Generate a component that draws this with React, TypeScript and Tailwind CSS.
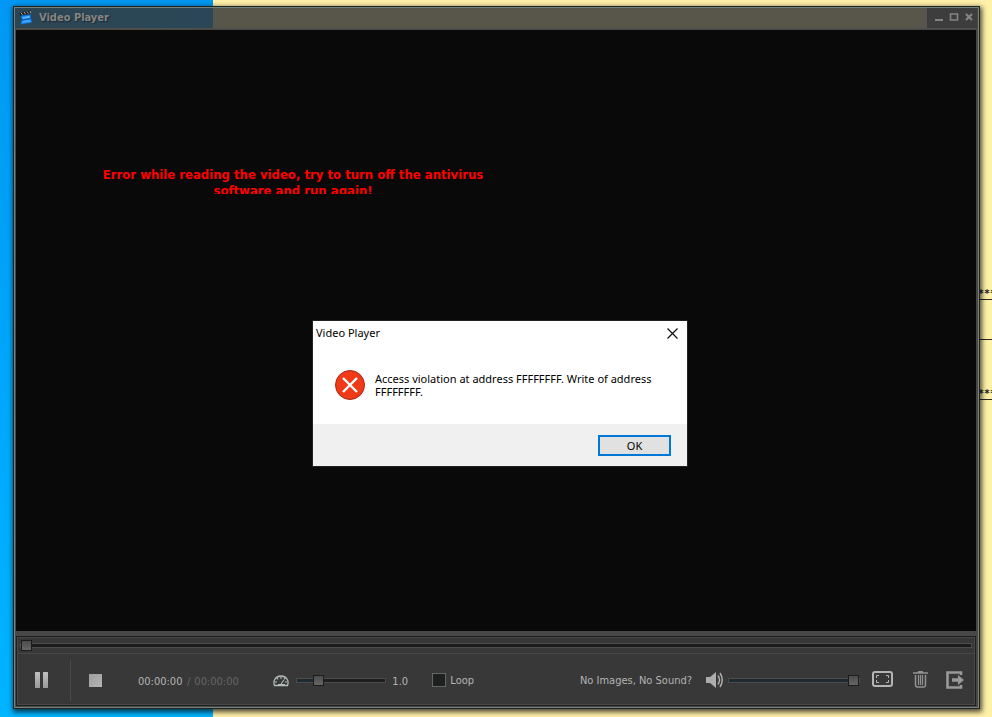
import { useState } from "react";

const uiFont = "font-['DejaVu_Sans_Condensed','DejaVu_Sans',sans-serif] [font-stretch:condensed]";
const dialogFont = "font-['Noto_Sans','Open_Sans',sans-serif]";

const thumb =
  "[&::-webkit-slider-thumb]:appearance-none [&::-webkit-slider-thumb]:size-[11px] [&::-webkit-slider-thumb]:rounded-none [&::-webkit-slider-thumb]:border [&::-webkit-slider-thumb]:border-[#1c1c1c] [&::-webkit-slider-thumb]:bg-linear-to-b [&::-webkit-slider-thumb]:from-[#4c4c4c] [&::-webkit-slider-thumb]:to-[#666666]";
const range =
  "block h-[11px] appearance-none bg-transparent [&::-webkit-slider-runnable-track]:h-[5px] [&::-webkit-slider-runnable-track]:border [&::-webkit-slider-runnable-track]:border-[#4c4c4c] [&::-webkit-slider-thumb]:-mt-1";

function Desktop() {
  return (
    <div className="absolute inset-0 -z-10 flex overflow-hidden" aria-hidden="true">
      <div className="w-[213px] bg-linear-to-b from-[#0098f4] to-[#00b4ff]" />
      <div className="relative flex-1 bg-[#fff1a8] font-['DejaVu_Sans_Mono',monospace] text-[10px] leading-[16px] text-[#222]">
        <div className="absolute top-[286px] right-0 h-[14px] w-[14px] border-b border-[#2b2920] font-bold">***</div>
        <div className="absolute top-[339px] right-0 h-px w-[14px] bg-[#2b2920]" />
        <div className="absolute top-[386px] right-0 h-[14px] w-[14px] border-b border-[#2b2920] font-bold">***</div>
      </div>
    </div>
  );
}

function AppIcon() {
  return (
    <svg width="14" height="15" viewBox="0 0 14 15" aria-hidden="true">
      <path d="M1.500 5.500 12 4.500 11.500 6.500 13 12.500 1.500 14.500 3 9Z" fill="#0878e8" />
      <path d="M3 7 11 5.800 10.500 8 4 9Z" fill="#58b8ff" />
      <path d="M4 10.500 11 9.500 12 12 3 13.200Z" fill="#3aa4ff" />
      <path d="M3 9.300 11 8.200v1L4 10.300Z" fill="#0a58c0" />
      <path d="M.5 3 12 .5 12.5 3 1 5.800Z" fill="#171c20" />
      <path d="m2 2.800 1.500 2M5 2.100l1.500 2M8 1.500l1.500 2M11 1l1 2" stroke="#bbb" strokeWidth="1" />
    </svg>
  );
}

function TitleBar() {
  return (
    <header className="flex h-[21px] border-b border-[#50504b]">
      <div className="flex flex-1 items-center bg-[linear-gradient(90deg,#2c4553_0,#2b4757_198px,#58554a_198px)] pb-px pl-1">
        <AppIcon />
        <h1 className={`ml-[6px] text-[11px] leading-4 font-bold text-[#858585] [text-shadow:1px_1px_1px_#1d2b34] ${uiFont}`}>
          Video Player
        </h1>
      </div>
      <div className="mr-px flex w-[51px] items-center justify-end gap-[5px] border-l border-[#555] bg-[#3d3d3d] pr-[3px] pb-[2px]">
        <button type="button" aria-label="Minimize">
          <svg width="10" height="10" viewBox="0 0 10 10"><path d="M1 8h8" stroke="#858585" strokeWidth="2" /></svg>
        </button>
        <button type="button" aria-label="Maximize">
          <svg width="10" height="10" viewBox="0 0 10 10"><path d="M1.500 2h7v6h-7z" fill="none" stroke="#858585" strokeWidth="1.600" /></svg>
        </button>
        <button type="button" aria-label="Close player">
          <svg width="10" height="10" viewBox="0 0 10 10"><path d="m2 2 6 6M8 2 2 8" stroke="#858585" strokeWidth="2.200" /></svg>
        </button>
      </div>
    </header>
  );
}

function Controls() {
  const [loop, setLoop] = useState(false);
  return (
    <div className="flex h-[51px] items-center border-t border-[#474747] pt-[2px] text-[11px] leading-4 text-[#b4b4b4]">
      <button type="button" aria-label="Pause" className="ml-[17px]">
        <svg width="14" height="18" viewBox="0 0 14 18">
          <defs><linearGradient id="silver" x2="0" y2="1"><stop stopColor="#c2c2c2" /><stop offset="1" stopColor="#999" /></linearGradient></defs>
          <rect x="0" y="1" width="5" height="16" rx=".5" fill="url(#silver)" />
          <rect x="8" y="1" width="5" height="16" rx=".5" fill="url(#silver)" />
        </svg>
      </button>
      <div className="ml-[21px] h-[41px] w-px bg-[#4a4a4a]" />
      <button type="button" aria-label="Stop" className="ml-[18px] size-[13px] bg-linear-to-br from-[#9d9d9d] to-[#b5b5b5]" />
      <p className="ml-9 flex gap-1 pt-[3px] text-[#666]">
        <span className="w-[45px] text-[#b4b4b4]">00:00:00</span>
        <span>/</span>
        <span className="w-[45px]">00:00:00</span>
      </p>
      <svg className="mt-px ml-[34px]" width="16" height="12" viewBox="0 0 16 12" fill="none" stroke="#b4bcbc" aria-hidden="true">
        <path d="M1.500 10.500C-.5 5.500 3 1 8 1s8.500 4.500 6.500 9.500Z" strokeWidth="1.300" />
        <path d="M8 2v2M4 3l1 1.500M12 3l-1 1.500M2 7h2M12 7h2M5 9.500h7M8 9l3-4" strokeWidth="1.100" />
      </svg>
      <input
        type="range" min="0" max="4" step="0.1" defaultValue="0.8" aria-label="Playback speed"
        className={`mt-px ml-[7px] w-[90px] [&::-webkit-slider-runnable-track]:bg-[linear-gradient(90deg,#1e2b32_18px,#1e1f1f_18px)] ${range} ${thumb}`}
      />
      <span className="ml-[6px] w-10 pt-[3px]">1.0</span>
      <label className="flex items-center gap-1">
        <input
          type="checkbox" checked={loop} onChange={(e) => setLoop(e.target.checked)}
          className="size-[14px] appearance-none border border-[#666] bg-[#1e1f1f] checked:bg-[#9a9a9a]"
        />
        <span className="pt-px">Loop</span>
      </label>
      <div className="ml-auto flex items-center">
        <a href="#help" className="pt-px">No Images, No Sound?</a>
        <button type="button" aria-label="Mute" className="ml-[14px]">
          <svg width="18" height="18" viewBox="0 0 18 18">
            <path d="M0 6h4l6-5v16l-6-5H0Z" fill="#acacac" />
            <path d="M12 4.500q3 4.500 0 9M14 2q4.500 7 0 14" fill="none" stroke="#acacac" strokeWidth="1.500" />
          </svg>
        </button>
        <input
          type="range" defaultValue="100" aria-label="Volume"
          className={`ml-[4px] w-[132px] [&::-webkit-slider-runnable-track]:bg-[#1e2b32] ${range} ${thumb}`}
        />
        <button type="button" aria-label="Fullscreen" className="ml-3">
          <svg width="21" height="18" viewBox="0 0 21 18" fill="none">
            <rect x="1" y="1" width="19" height="14" rx="2" stroke="#b4b4b4" strokeWidth="2" />
            <path d="M4.500 7V4.500H7M14 4.500h2.500V7M16.500 9v2.500H14M7 11.500H4.500V9" stroke="#b4b4b4" />
          </svg>
        </button>
        <button type="button" aria-label="Delete" className="ml-5">
          <svg width="15" height="18" viewBox="0 0 15 18" fill="none" stroke="#929292">
            <path d="M0 2h15M5 .5h5" strokeWidth="1.600" />
            <path d="M2.500 4v10q0 2 2 2h6q2 0 2-2V4" strokeWidth="1.500" />
            <path d="M5.500 4v10M7.500 4v10M9.500 4v10" strokeWidth="1.200" />
          </svg>
        </button>
        <button type="button" aria-label="Exit" className="mr-[10px] ml-[18px]">
          <svg width="18" height="18" viewBox="0 0 18 18" fill="none" stroke="#999">
            <path d="M15 4V1.500H1.500v15H15V14" strokeWidth="2.600" />
            <path d="M6 9h7" strokeWidth="3.500" />
            <path d="m12 4 6 5-6 5Z" fill="#999" stroke="none" />
          </svg>
        </button>
      </div>
    </div>
  );
}

function ErrorDialog() {
  return (
    <section
      role="alertdialog" aria-labelledby="dialog-title" aria-describedby="dialog-message"
      className={`absolute top-[321px] left-[313px] w-[374px] bg-white text-[11px] text-black outline outline-[#222] ${dialogFont}`}
    >
      <header className="flex h-6 items-center justify-between pr-[9px] pl-[3px]">
        <h2 id="dialog-title" className="leading-4">Video Player</h2>
        <button type="button" aria-label="Close">
          <svg width="11" height="11" viewBox="0 0 11 11"><path d="m.5.5 10 10M10.500.5l-10 10" stroke="#111" strokeWidth="1.200" /></svg>
        </button>
      </header>
      <div className="flex h-[79px] items-start gap-[10px] pt-[25px] pr-5 pl-[22px]">
        <svg className="shrink-0" width="30" height="30" viewBox="0 0 30 30" aria-hidden="true">
          <circle cx="15" cy="15" r="14.500" fill="#f03a17" stroke="#a52a18" />
          <path d="m8 8 14 14M22 8 8 22" stroke="#fff" strokeWidth="2.400" />
        </svg>
        <p id="dialog-message" className="pt-[2px] leading-[13px]">
          Access violation at address FFFFFFFF. Write of address FFFFFFFF.
        </p>
      </div>
      <footer className="flex h-[42px] items-center justify-end bg-[#f0f0f0] pr-4">
        <button type="button" className="h-[21px] w-[73px] border-2 border-[#0078d7] bg-[#e1e1e1] pt-px leading-4">OK</button>
      </footer>
    </section>
  );
}

export default function App() {
  return (
    <main className={`relative isolate flex min-h-screen flex-col pt-[6px] pr-3 pb-2 pl-[13px] ${uiFont}`}>
      <Desktop />
      <div className="flex flex-1 flex-col border border-[#202522] bg-[#484848] shadow-[1px_2px_5px_1px_rgba(0,0,0,0.7)]">
        <div className="flex flex-1 flex-col border border-[#73807d] bg-[#484848] pb-px">
          <TitleBar />
          <div className="mt-px mr-[2px] ml-px flex-1 bg-[#090909]">
            <p className="mt-[137px] ml-[84px] h-[27px] w-[386px] overflow-hidden text-center text-[13px] leading-4 font-bold text-[#f00]">
              Error while reading the video, try to turn off the antivirus software and run again!
            </p>
          </div>
          <div className="mt-[5px] mr-[2px] ml-px border border-[#1e1e1e] bg-[#383838]">
            <div className="border border-[#484848]">
              <div className="flex h-[15px] items-center px-[2px]">
                <input
                  type="range" defaultValue="0" aria-label="Position"
                  className={`w-full [&::-webkit-slider-runnable-track]:bg-[#1c1c1c] ${range} ${thumb}`}
                />
              </div>
              <Controls />
            </div>
          </div>
        </div>
      </div>
      <ErrorDialog />
    </main>
  );
}
